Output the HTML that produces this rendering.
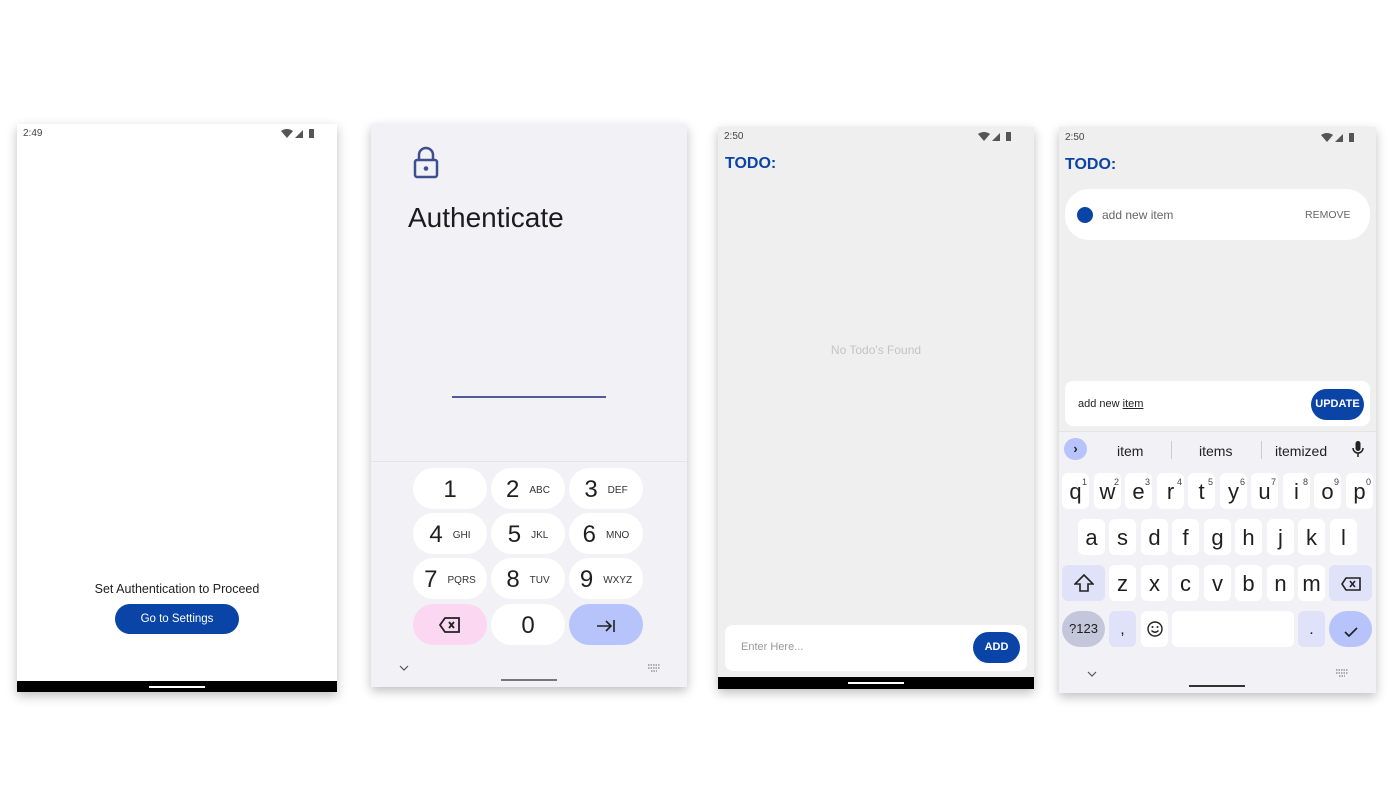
<!DOCTYPE html>
<html><head><meta charset="utf-8"><style>
*{margin:0;padding:0;box-sizing:border-box}
body{width:1400px;height:800px;background:#fff;position:relative;overflow:hidden;font-family:"Liberation Sans",Roboto,sans-serif}
.a{position:absolute}
.scr{position:absolute;box-shadow:0 4px 10px rgba(0,0,0,.25)}
.k{position:absolute;background:#fff;border-radius:6px;text-align:center;font-size:22px;color:#1f1f1f;line-height:38px;width:27px;height:36px}
.k sup{position:absolute;right:2px;top:-10px;font-size:9px;color:#444}
.pk{position:absolute;width:74px;height:41px;border-radius:21px;background:#fff;font-size:24px;color:#1f1f1f;line-height:43px;text-align:center}
.pk small{font-size:10px;margin-left:10px;color:#333;vertical-align:middle}
.st{font-size:10px;color:#444}
</style></head><body>

<!-- Screen 1 -->
<div class="scr" style="left:17px;top:124px;width:320px;height:568px;background:#fff">
  <div class="a st" style="left:6px;top:4px">2:49</div>
  <svg class="a" style="left:264px;top:4px" width="34" height="10"><path d="M0 3 Q6 -1 12 3 L6 10Z" fill="#555"/><path d="M14 10 L22 2 L22 10Z" fill="#555"/><rect x="28" y="1" width="5" height="9" fill="#555"/></svg>
  <div class="a" style="left:0;width:320px;top:458px;text-align:center;font-size:12.5px;color:#222">Set Authentication to Proceed</div>
  <div class="a" style="left:98px;top:480px;width:124px;height:30px;border-radius:15px;background:#0a44a6;color:#fff;font-size:11.5px;text-align:center;line-height:30px">Go to Settings</div>
  <div class="a" style="left:0;top:557px;width:320px;height:11px;background:#000"></div>
  <div class="a" style="left:132px;top:562px;width:56px;height:2px;background:#fff"></div>
</div>

<!-- Screen 2 -->
<div class="scr" style="left:371px;top:124px;width:316px;height:563px;background:#f2f1f6">
  <svg class="a" style="left:41px;top:22px" width="28" height="36" viewBox="0 0 28 36"><path d="M7 14 V9 a7 7 0 0 1 14 0 V14" fill="none" stroke="#3d4f8e" stroke-width="2.5"/><rect x="3" y="14" width="22" height="17" rx="2" fill="none" stroke="#3d4f8e" stroke-width="2.5"/><circle cx="14" cy="22.5" r="2.3" fill="#3d4f8e"/></svg>
  <div class="a" style="left:37px;top:78px;font-size:28px;color:#1c1c1c">Authenticate</div>
  <div class="a" style="left:81px;top:272px;width:154px;height:2px;background:#4f5d94"></div>
  <div class="a" style="left:0;top:337px;width:316px;height:1px;background:#e4e3e8"></div>
  <div class="pk" style="left:42px;top:344px">1</div>
  <div class="pk" style="left:120px;top:344px">2<small>ABC</small></div>
  <div class="pk" style="left:198px;top:344px">3<small>DEF</small></div>
  <div class="pk" style="left:42px;top:389px">4<small>GHI</small></div>
  <div class="pk" style="left:120px;top:389px">5<small>JKL</small></div>
  <div class="pk" style="left:198px;top:389px">6<small>MNO</small></div>
  <div class="pk" style="left:42px;top:434px">7<small>PQRS</small></div>
  <div class="pk" style="left:120px;top:434px">8<small>TUV</small></div>
  <div class="pk" style="left:198px;top:434px">9<small>WXYZ</small></div>
  <div class="pk" style="left:42px;top:480px;background:#fcd7f1"><svg width="22" height="16" style="margin-top:12px" viewBox="0 0 22 16"><path d="M6 1 H20 V15 H6 L1 8Z" fill="none" stroke="#222" stroke-width="1.8"/><path d="M10 5 L15 11 M15 5 L10 11" stroke="#222" stroke-width="1.8"/></svg></div>
  <div class="pk" style="left:120px;top:480px">0</div>
  <div class="pk" style="left:198px;top:480px;background:#b7c4fb"><svg width="20" height="14" style="margin-top:13px" viewBox="0 0 20 14"><path d="M1 7 H15 M10 2 L15 7 L10 12 M18 1 V13" fill="none" stroke="#222" stroke-width="1.6"/></svg></div>
  <svg class="a" style="left:28px;top:540px" width="10" height="8"><path d="M1 2 L5 6 L9 2" fill="none" stroke="#555" stroke-width="1.2"/></svg>
  <svg class="a" style="left:276px;top:539px" width="14" height="10"><path d="M1 2h12M1 5h12M4 8h6" stroke="#666" stroke-width="1" stroke-dasharray="1.5 1"/></svg>
  <div class="a" style="left:130px;top:555px;width:56px;height:2px;background:#777"></div>
</div>

<!-- Screen 3 -->
<div class="scr" style="left:718px;top:127px;width:316px;height:562px;background:#efefef">
  <div class="a st" style="left:6px;top:4px">2:50</div>
  <svg class="a" style="left:260px;top:4px" width="34" height="10"><path d="M0 3 Q6 -1 12 3 L6 10Z" fill="#555"/><path d="M14 10 L22 2 L22 10Z" fill="#555"/><rect x="28" y="1" width="5" height="9" fill="#555"/></svg>
  <div class="a" style="left:7px;top:28px;font-size:16px;font-weight:bold;color:#0a44a6">TODO:</div>
  <div class="a" style="left:0;width:316px;top:216px;text-align:center;font-size:12px;color:#c4c4c4">No Todo's Found</div>
  <div class="a" style="left:7px;top:498px;width:302px;height:46px;border-radius:8px;background:#fff"></div>
  <div class="a" style="left:23px;top:514px;font-size:11px;color:#999">Enter Here...</div>
  <div class="a" style="left:255px;top:505px;width:47px;height:31px;border-radius:16px;background:#0a44a6;color:#fff;font-size:11px;font-weight:bold;text-align:center;line-height:31px">ADD</div>
  <div class="a" style="left:0;top:550px;width:316px;height:12px;background:#000"></div>
  <div class="a" style="left:130px;top:555px;width:56px;height:2px;background:#fff"></div>
</div>

<!-- Screen 4 -->
<div class="scr" style="left:1059px;top:127px;width:317px;height:566px;background:#efefef">
  <div class="a st" style="left:6px;top:5px">2:50</div>
  <svg class="a" style="left:262px;top:5px" width="34" height="10"><path d="M0 3 Q6 -1 12 3 L6 10Z" fill="#555"/><path d="M14 10 L22 2 L22 10Z" fill="#555"/><rect x="28" y="1" width="5" height="9" fill="#555"/></svg>
  <div class="a" style="left:6px;top:29px;font-size:16px;font-weight:bold;color:#0a44a6">TODO:</div>
  <div class="a" style="left:6px;top:62px;width:305px;height:51px;border-radius:24px;background:#fff"></div>
  <div class="a" style="left:18px;top:80px;width:16px;height:16px;border-radius:50%;background:#0a44a6"></div>
  <div class="a" style="left:43px;top:81px;font-size:12px;color:#666">add new item</div>
  <div class="a" style="left:246px;top:82px;font-size:10.5px;color:#666">REMOVE</div>
  <div class="a" style="left:6px;top:254px;width:305px;height:45px;border-radius:8px;background:#fff"></div>
  <div class="a" style="left:19px;top:271px;font-size:11px;color:#222">add new <u>item</u></div>
  <div class="a" style="left:252px;top:262px;width:53px;height:31px;border-radius:16px;background:#0a44a6;color:#fff;font-size:11px;font-weight:bold;text-align:center;line-height:31px">UPDATE</div>
  <!-- keyboard -->
  <div class="a" style="left:0;top:304px;width:317px;height:262px;background:#f2f1f6;border-top:1px solid #e4e4e8"></div>
  <div class="a" style="left:5px;top:311px;width:23px;height:22px;border-radius:11px;background:#b7c4fb;text-align:center;font-size:13px;line-height:21px;color:#222;font-weight:bold">›</div>
  <div class="a" style="left:58px;top:316px;font-size:14px;color:#222">item</div>
  <div class="a" style="left:112px;top:314px;width:1px;height:18px;background:#ccc"></div>
  <div class="a" style="left:140px;top:316px;font-size:14px;color:#222">items</div>
  <div class="a" style="left:202px;top:314px;width:1px;height:18px;background:#ccc"></div>
  <div class="a" style="left:216px;top:316px;font-size:14px;color:#222">itemized</div>
  <svg class="a" style="left:293px;top:314px" width="12" height="17" viewBox="0 0 12 17"><rect x="3.5" y="0" width="5" height="10" rx="2.5" fill="#222"/><path d="M1 7 a5 5 0 0 0 10 0 M6 12 V16" fill="none" stroke="#222" stroke-width="1.5"/></svg>
  <div class="k" style="left:3px;top:346px">q<sup>1</sup></div>
  <div class="k" style="left:35px;top:346px">w<sup>2</sup></div>
  <div class="k" style="left:66px;top:346px">e<sup>3</sup></div>
  <div class="k" style="left:98px;top:346px">r<sup>4</sup></div>
  <div class="k" style="left:129px;top:346px">t<sup>5</sup></div>
  <div class="k" style="left:161px;top:346px">y<sup>6</sup></div>
  <div class="k" style="left:192px;top:346px">u<sup>7</sup></div>
  <div class="k" style="left:224px;top:346px">i<sup>8</sup></div>
  <div class="k" style="left:255px;top:346px">o<sup>9</sup></div>
  <div class="k" style="left:287px;top:346px">p<sup>0</sup></div>
  <div class="k" style="left:19px;top:392px">a</div>
  <div class="k" style="left:50px;top:392px">s</div>
  <div class="k" style="left:82px;top:392px">d</div>
  <div class="k" style="left:113px;top:392px">f</div>
  <div class="k" style="left:145px;top:392px">g</div>
  <div class="k" style="left:176px;top:392px">h</div>
  <div class="k" style="left:208px;top:392px">j</div>
  <div class="k" style="left:239px;top:392px">k</div>
  <div class="k" style="left:271px;top:392px">l</div>
  <div class="k" style="left:3px;top:438px;width:43px;background:#dfe2f8"><svg width="20" height="18" style="margin-top:9px" viewBox="0 0 20 18"><path d="M10 1 L19 10 H14 V17 H6 V10 H1Z" fill="none" stroke="#222" stroke-width="1.6"/></svg></div>
  <div class="k" style="left:50px;top:438px">z</div>
  <div class="k" style="left:82px;top:438px">x</div>
  <div class="k" style="left:113px;top:438px">c</div>
  <div class="k" style="left:145px;top:438px">v</div>
  <div class="k" style="left:176px;top:438px">b</div>
  <div class="k" style="left:208px;top:438px">n</div>
  <div class="k" style="left:239px;top:438px">m</div>
  <div class="k" style="left:270px;top:438px;width:43px;background:#dfe2f8"><svg width="20" height="14" style="margin-top:11px" viewBox="0 0 20 14"><path d="M5 1 H19 V13 H5 L1 7Z" fill="none" stroke="#222" stroke-width="1.6"/><path d="M9 4 L14 10 M14 4 L9 10" stroke="#222" stroke-width="1.6"/></svg></div>
  <div class="k" style="left:3px;top:484px;width:43px;border-radius:18px;background:#c4c6dc;font-size:13px;line-height:36px">?123</div>
  <div class="k" style="left:50px;top:484px;background:#dfe2f8;font-size:16px">,</div>
  <div class="k" style="left:82px;top:484px"><svg width="16" height="16" style="margin-top:10px" viewBox="0 0 16 16"><circle cx="8" cy="8" r="7" fill="none" stroke="#222" stroke-width="1.4"/><circle cx="5.5" cy="6" r="1" fill="#222"/><circle cx="10.5" cy="6" r="1" fill="#222"/><path d="M4.5 9.5 Q8 13 11.5 9.5" fill="none" stroke="#222" stroke-width="1.3"/></svg></div>
  <div class="k" style="left:113px;top:484px;width:122px"></div>
  <div class="k" style="left:239px;top:484px;background:#dfe2f8;font-size:16px">.</div>
  <div class="k" style="left:270px;top:484px;width:43px;border-radius:18px;background:#b7c4fb"><svg width="14" height="10" style="margin-top:13px" viewBox="0 0 14 10"><path d="M1 5 L5 9 L13 1" fill="none" stroke="#222" stroke-width="1.7"/></svg></div>
  <svg class="a" style="left:28px;top:543px" width="10" height="8"><path d="M1 2 L5 6 L9 2" fill="none" stroke="#555" stroke-width="1.2"/></svg>
  <svg class="a" style="left:276px;top:541px" width="14" height="10"><path d="M1 2h12M1 5h12M4 8h6" stroke="#666" stroke-width="1" stroke-dasharray="1.5 1"/></svg>
  <div class="a" style="left:130px;top:558px;width:56px;height:2px;background:#333"></div>
</div>
</body></html>
